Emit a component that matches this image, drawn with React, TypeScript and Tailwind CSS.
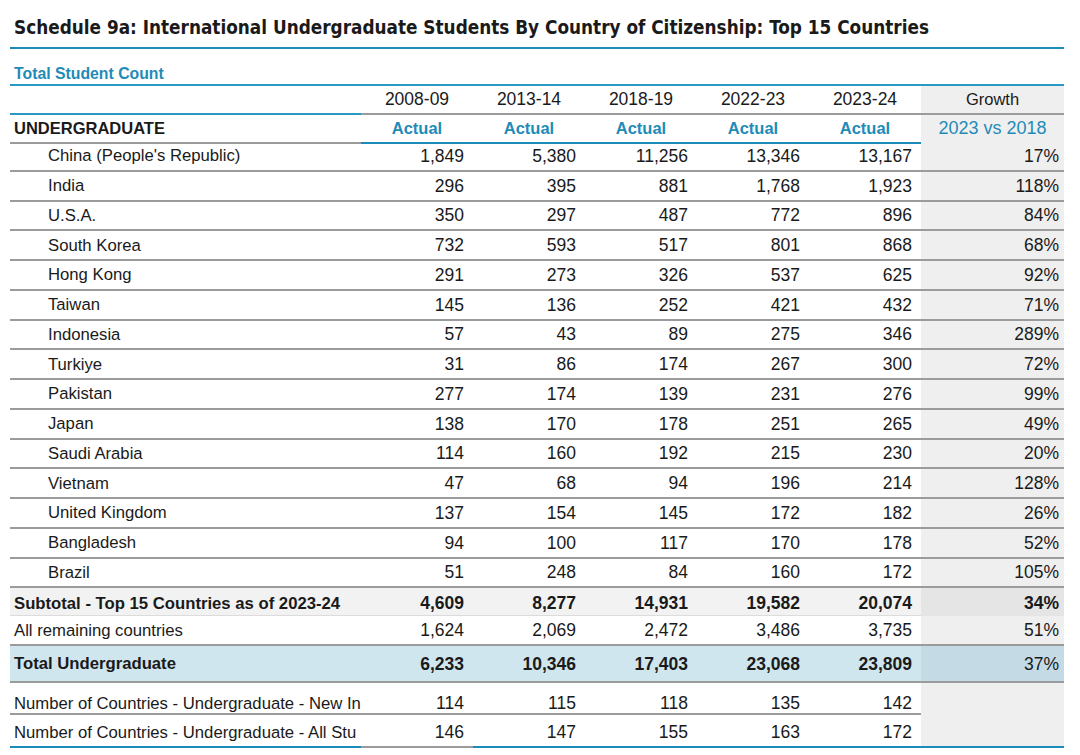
import React from "react";

type Row = { name: string; vals: string[]; growth: string };

// top 15 countries, 2023-24 ordering
const countries: Row[] = [
  { name: "China (People's Republic)", vals: ["1,849", "5,380", "11,256", "13,346", "13,167"], growth: "17%" },
  { name: "India", vals: ["296", "395", "881", "1,768", "1,923"], growth: "118%" },
  { name: "U.S.A.", vals: ["350", "297", "487", "772", "896"], growth: "84%" },
  { name: "South Korea", vals: ["732", "593", "517", "801", "868"], growth: "68%" },
  { name: "Hong Kong", vals: ["291", "273", "326", "537", "625"], growth: "92%" },
  { name: "Taiwan", vals: ["145", "136", "252", "421", "432"], growth: "71%" },
  { name: "Indonesia", vals: ["57", "43", "89", "275", "346"], growth: "289%" },
  { name: "Turkiye", vals: ["31", "86", "174", "267", "300"], growth: "72%" },
  { name: "Pakistan", vals: ["277", "174", "139", "231", "276"], growth: "99%" },
  { name: "Japan", vals: ["138", "170", "178", "251", "265"], growth: "49%" },
  { name: "Saudi Arabia", vals: ["114", "160", "192", "215", "230"], growth: "20%" },
  { name: "Vietnam", vals: ["47", "68", "94", "196", "214"], growth: "128%" },
  { name: "United Kingdom", vals: ["137", "154", "145", "172", "182"], growth: "26%" },
  { name: "Bangladesh", vals: ["94", "100", "117", "170", "178"], growth: "52%" },
  { name: "Brazil", vals: ["51", "248", "84", "160", "172"], growth: "105%" },
];

const years = ["2008-09", "2013-14", "2018-19", "2022-23", "2023-24"];

const grid = "grid grid-cols-[351px_112px_112px_112px_112px_112px_143px]";
const font = { fontFamily: "'Liberation Sans', Arial, sans-serif" };
const narrow = { fontFamily: "'Liberation Sans Narrow', 'DejaVu Sans Condensed', 'Liberation Sans', sans-serif" };

const num = "flex items-center justify-end pr-[9px] text-[17.5px]";
const pct = "flex items-center justify-end pr-[5px] text-[17.5px]";

export default function App() {
  return (
    <div className="w-[1080px] h-[755px] bg-white text-[#1a1a1a] pl-[10px] overflow-hidden" style={font}>
      <div className="w-[1054px]">
        {/* title */}
        <div className="h-[49px] pt-[16px] pl-[4px] border-b-2 border-[#1b8bb9]">
          <h1 className="text-[18.8px] leading-[24px] font-bold" style={narrow}>
            Schedule 9a: International Undergraduate Students By Country of Citizenship: Top 15 Countries
          </h1>
        </div>

        <div className="h-[37px] pt-[13px] pl-[4px] border-b-2 border-[#2a98c4]">
          <span className="text-[15.8px] leading-[20px] font-bold text-[#1f8bb8]">Total Student Count</span>
        </div>

        {/* header rows */}
        <div className={`${grid} h-[29px] text-[17.5px]`}>
          <div className="border-b-2 border-[#2a98c4]" />
          {years.map((y) => (
            <div key={y} className="border-b-2 border-[#9b9b9b] flex items-center justify-center">
              {y}
            </div>
          ))}
          <div className="bg-[#efefef] border-b-2 border-[#9b9b9b] flex items-center justify-center text-[16.5px]">
            Growth
          </div>
        </div>
        <div className={`${grid} h-[27px] text-[16.5px]`}>
          <div className="border-b-2 border-[#9b9b9b] flex items-center pl-[4px] font-bold">UNDERGRADUATE</div>
          {years.map((y) => (
            <div
              key={y}
              className="border-b-2 border-[#1b8bb9] flex items-center justify-center text-[#1f8bb8] font-bold text-[16.5px]"
            >
              Actual
            </div>
          ))}
          <div className="bg-[#efefef] border-b-2 border-[#1b8bb9] flex items-center justify-center text-[#1f8bb8] text-[18px]">
            2023 vs 2018
          </div>
        </div>

        {/* country rows */}
        {countries.map((r) => (
          <div key={r.name} className={`${grid} h-[29.75px] text-[16.7px] border-b-2 border-[#9b9b9b]`}>
            <div className="flex items-center pl-[38px]">{r.name}</div>
            {r.vals.map((v, i) => (
              <div key={i} className={num}>
                {v}
              </div>
            ))}
            <div className={`bg-[#efefef] ${pct}`}>{r.growth}</div>
          </div>
        ))}

        {/* subtotal */}
        <div className={`${grid} h-[28px] text-[16.7px] font-bold bg-[#f2f2f2] border-b border-[#dcdcdc]`}>
          <div className="flex items-center pl-[4px] pt-[2px]">Subtotal - Top 15 Countries as of 2023-24</div>
          {["4,609", "8,277", "14,931", "19,582", "20,074"].map((v, i) => (
            <div key={i} className={`${num} pt-[2px]`}>
              {v}
            </div>
          ))}
          <div className={`bg-[#e5e5e5] ${pct} pt-[2px]`}>34%</div>
        </div>

        <div className={`${grid} h-[30px] text-[16.7px] border-b-2 border-[#9b9b9b]`}>
          <div className="flex items-center pl-[4px]">All remaining countries</div>
          {["1,624", "2,069", "2,472", "3,486", "3,735"].map((v, i) => (
            <div key={i} className={num}>
              {v}
            </div>
          ))}
          <div className={`bg-[#efefef] ${pct}`}>51%</div>
        </div>

        {/* total */}
        <div className={`${grid} h-[37px] text-[16.7px] font-bold bg-[#d0e6ee] border-b-2 border-[#9b9b9b]`}>
          <div className="flex items-center pl-[4px]">Total Undergraduate</div>
          {["6,233", "10,346", "17,403", "23,068", "23,809"].map((v, i) => (
            <div key={i} className={num}>
              {v}
            </div>
          ))}
          <div className={`bg-[#c4dbe6] ${pct} font-normal`}>37%</div>
        </div>

        {/* country counts */}
        <div className={`${grid} h-[32px] text-[16.7px] border-b-2 border-[#9b9b9b]`}>
          <div className="flex items-center pt-[7px] pl-[4px] whitespace-nowrap overflow-hidden">
            Number of Countries - Undergraduate - New In
          </div>
          {["114", "115", "118", "135", "142"].map((v, i) => (
            <div key={i} className={`${num} pt-[7px]`}>
              {v}
            </div>
          ))}
          <div className="bg-[#efefef]" />
        </div>
        <div className={`${grid} h-[29px] text-[16.7px]`}>
          <div className="flex items-center pt-[4px] pl-[4px] whitespace-nowrap overflow-hidden border-b-2 border-[#1b8bb9]">
            Number of Countries - Undergraduate - All Stu
          </div>
          {["146", "147", "155", "163", "172"].map((v, i) => (
            <div
              key={i}
              className={`${num} pt-[4px] border-b-2 ${i === 0 ? "border-[#9b9b9b]" : "border-[#1b8bb9]"}`}
            >
              {v}
            </div>
          ))}
          <div className="bg-[#efefef] border-b-2 border-[#1b8bb9]" />
        </div>
      </div>
    </div>
  );
}
